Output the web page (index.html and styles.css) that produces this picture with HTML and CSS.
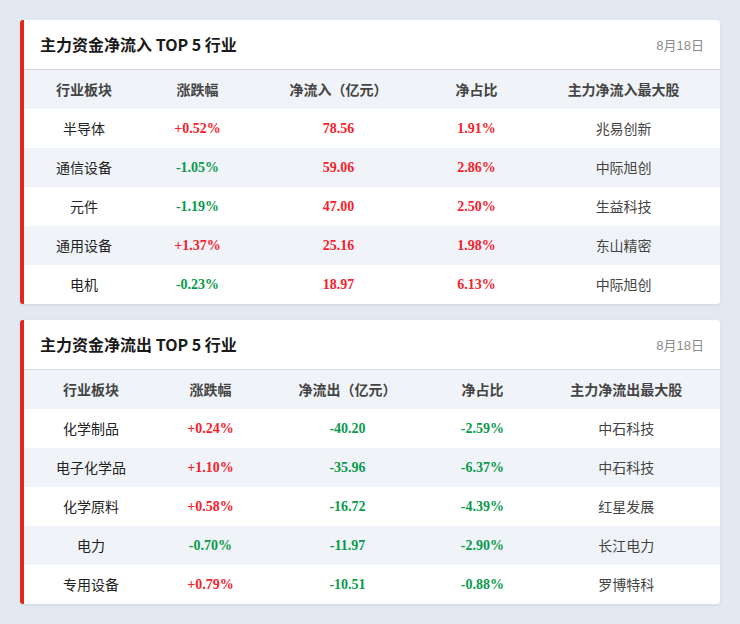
FILE: index.html
```html
<!DOCTYPE html>
<html lang="zh">
<head>
<meta charset="utf-8">
<link rel="stylesheet" href="styles.css">
</head>
<body>
<div class="page">
  <section class="card">
    <header class="card-head">
      <h2 class="title">主力资金净流入 TOP 5 行业</h2>
      <span class="date">8月18日</span>
    </header>
    <table class="tbl">
      <thead>
        <tr><th>行业板块</th><th>涨跌幅</th><th>净流入（亿元）</th><th>净占比</th><th>主力净流入最大股</th></tr>
      </thead>
      <tbody>
        <tr><td>半导体</td><td class="num up">+0.52%</td><td class="num up">78.56</td><td class="num up">1.91%</td><td class="stock">兆易创新</td></tr>
        <tr><td>通信设备</td><td class="num down">-1.05%</td><td class="num up">59.06</td><td class="num up">2.86%</td><td class="stock">中际旭创</td></tr>
        <tr><td>元件</td><td class="num down">-1.19%</td><td class="num up">47.00</td><td class="num up">2.50%</td><td class="stock">生益科技</td></tr>
        <tr><td>通用设备</td><td class="num up">+1.37%</td><td class="num up">25.16</td><td class="num up">1.98%</td><td class="stock">东山精密</td></tr>
        <tr><td>电机</td><td class="num down">-0.23%</td><td class="num up">18.97</td><td class="num up">6.13%</td><td class="stock">中际旭创</td></tr>
      </tbody>
    </table>
  </section>
  <section class="card">
    <header class="card-head">
      <h2 class="title">主力资金净流出 TOP 5 行业</h2>
      <span class="date">8月18日</span>
    </header>
    <table class="tbl">
      <thead>
        <tr><th>行业板块</th><th>涨跌幅</th><th>净流出（亿元）</th><th>净占比</th><th>主力净流出最大股</th></tr>
      </thead>
      <tbody>
        <tr><td>化学制品</td><td class="num up">+0.24%</td><td class="num down">-40.20</td><td class="num down">-2.59%</td><td class="stock">中石科技</td></tr>
        <tr><td>电子化学品</td><td class="num up">+1.10%</td><td class="num down">-35.96</td><td class="num down">-6.37%</td><td class="stock">中石科技</td></tr>
        <tr><td>化学原料</td><td class="num up">+0.58%</td><td class="num down">-16.72</td><td class="num down">-4.39%</td><td class="stock">红星发展</td></tr>
        <tr><td>电力</td><td class="num down">-0.70%</td><td class="num down">-11.97</td><td class="num down">-2.90%</td><td class="stock">长江电力</td></tr>
        <tr><td>专用设备</td><td class="num up">+0.79%</td><td class="num down">-10.51</td><td class="num down">-0.88%</td><td class="stock">罗博特科</td></tr>
      </tbody>
    </table>
  </section>
</div>
</body>
</html>
```

FILE: styles.css
```css
html, body {
  margin: 0;
  padding: 0;
  background: #e3e9f1;
}
body {
  font-family: "Noto Sans CJK SC", "Noto Sans", sans-serif;
  color: #222;
}
.page {
  padding: 20px;
  display: flex;
  flex-direction: column;
  gap: 16px;
}
.card {
  background: #fff;
  border-left: 4px solid #e0281e;
  border-radius: 3px;
  box-shadow: 0 1px 3px rgba(30, 50, 80, 0.10);
  overflow: hidden;
}
.card-head {
  height: 49px;
  border-bottom: 1px solid #d6d9de;
  display: flex;
  align-items: center;
  justify-content: space-between;
  padding: 0 16px 0 16px;
}
.title {
  margin: 0 0 2px;
  font-size: 16px;
  line-height: 1;
  font-weight: 700;
  color: #1a1a1a;
}
.date {
  font-family: "Liberation Sans", "Noto Sans CJK SC", sans-serif;
  font-size: 13px;
  color: #8c8c8c;
}
.tbl {
  width: 100%;
  border-collapse: collapse;
}
.tbl th, .tbl td {
  height: 38px;
  padding: 0 18px 1px;
  line-height: 1;
  text-align: center;
  vertical-align: middle;
}
.tbl th {
  font-size: 14px;
  font-weight: 700;
  color: #444;
  background: #f0f4f8;
}
.tbl td {
  font-size: 14px;
  color: #222;
}
.tbl tbody tr:nth-child(even) td {
  background: #f0f4f8;
}
.tbl td.stock {
  color: #444;
}
.tbl td.num {
  font-family: "Liberation Serif", serif;
  font-weight: 700;
  font-size: 14px;
  padding-bottom: 0;
}
.tbl td.up { color: #f5222d; }
.tbl td.down { color: #0a9a4c; }
```
